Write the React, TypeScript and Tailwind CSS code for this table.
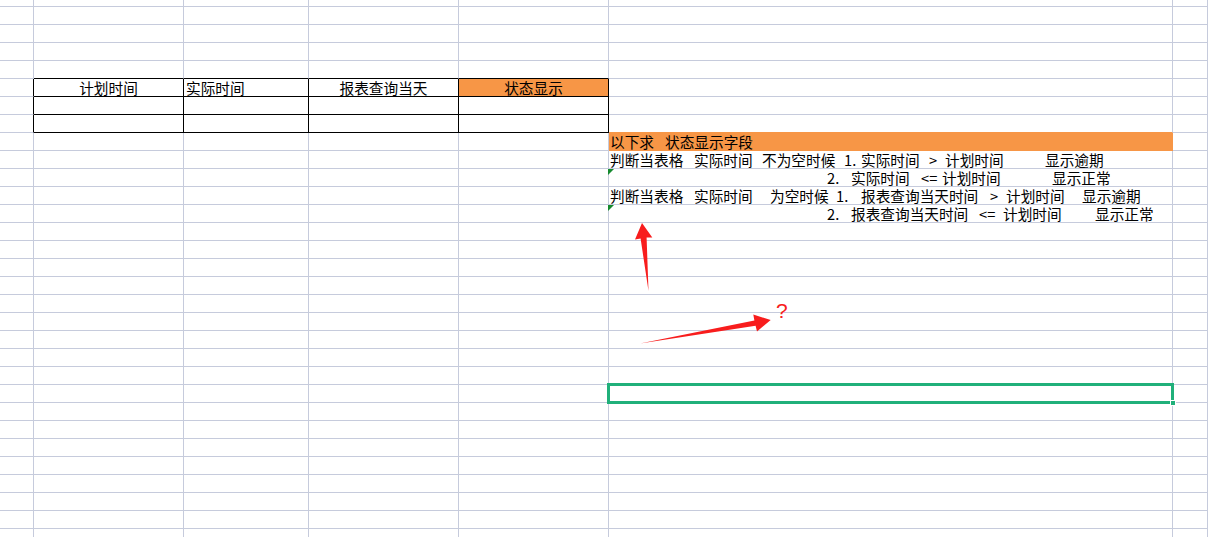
import React from 'react';

const ROWS = 31;
const COLS = 7;

type Seg = { w: string; t: string };

// text lines in the wide F column, rows 8..12
const noteLines: Record<number, { lead: string; segs: Seg[] }> = {
  8: {
    lead: 'pl-[1px]',
    segs: [
      { w: 'w-[55px]', t: '以下求' },
      { w: '', t: '状态显示字段' },
    ],
  },
  9: {
    lead: 'pl-[1px]',
    segs: [
      { w: 'w-[84px]', t: '判断当表格' },
      { w: 'w-[68px]', t: '实际时间' },
      { w: 'w-[82px]', t: '不为空时候' },
      { w: 'w-[17px]', t: '1.' },
      { w: 'w-[68px]', t: '实际时间' },
      { w: 'w-[16px]', t: '>' },
      { w: 'w-[100px]', t: '计划时间' },
      { w: '', t: '显示逾期' },
    ],
  },
  10: {
    lead: 'pl-[218px]',
    segs: [
      { w: 'w-[24px]', t: '2.' },
      { w: 'w-[70px]', t: '实际时间' },
      { w: 'w-[21px]', t: '<=' },
      { w: 'w-[110px]', t: '计划时间' },
      { w: '', t: '显示正常' },
    ],
  },
  11: {
    lead: 'pl-[1px]',
    segs: [
      { w: 'w-[84px]', t: '判断当表格' },
      { w: 'w-[76px]', t: '实际时间' },
      { w: 'w-[66px]', t: '为空时候' },
      { w: 'w-[25px]', t: '1.' },
      { w: 'w-[129px]', t: '报表查询当天时间' },
      { w: 'w-[16px]', t: '>' },
      { w: 'w-[76px]', t: '计划时间' },
      { w: '', t: '显示逾期' },
    ],
  },
  12: {
    lead: 'pl-[218px]',
    segs: [
      { w: 'w-[24px]', t: '2.' },
      { w: 'w-[128px]', t: '报表查询当天时间' },
      { w: 'w-[24px]', t: '<=' },
      { w: 'w-[92px]', t: '计划时间' },
      { w: '', t: '显示正常' },
    ],
  },
};

const headers: Record<number, { t: string; cls: string }> = {
  1: { t: '计划时间', cls: 'text-center' },
  2: { t: '实际时间', cls: 'pl-[2px]' },
  3: { t: '报表查询当天', cls: 'text-center' },
  4: { t: '状态显示', cls: 'text-center' },
};

function cellClass(r: number, c: number) {
  const inTable = r >= 5 && r <= 7;
  const orangeBar = r === 8 && c === 5;

  let right = 'border-r-[#c6cbdc]';
  if (inTable && c <= 4) right = 'border-r-black';
  if (orangeBar) right = 'border-r-[#f79646]';

  let bottom = 'border-b-[#c6cbdc]';
  if (r >= 4 && r <= 7 && c >= 1 && c <= 4) bottom = 'border-b-black';
  if ((r === 7 || r === 8) && c === 5) bottom = 'border-b-[#f79646]';

  let bg = '';
  if ((r === 5 && c === 4) || orangeBar) bg = 'bg-[#f79646]';

  const h = r === 0 ? 'h-[7px]' : 'h-[18px]';
  return `relative border-r border-b ${right} ${bottom} ${bg} ${h}`;
}

function ErrorMark() {
  return (
    <span className="absolute -left-px top-0 h-0 w-0 border-t-[6px] border-r-[6px] border-t-[#158a2e] border-r-transparent" />
  );
}

function cellContent(r: number, c: number) {
  if (r === 5 && headers[c]) {
    return (
      <div className={`whitespace-nowrap leading-[17px] ${headers[c].cls}`}>{headers[c].t}</div>
    );
  }
  if (c === 5 && noteLines[r]) {
    const line = noteLines[r];
    return (
      <>
        {(r === 10 || r === 12) && <ErrorMark />}
        <div className={`flex whitespace-nowrap leading-[17px] ${line.lead}`}>
          {line.segs.map((s, i) => (
            <span key={i} className={`inline-block shrink-0 ${s.w}`}>
              {s.t}
            </span>
          ))}
        </div>
      </>
    );
  }
  if (r === 22 && c === 5) {
    return (
      <div className="pointer-events-none absolute -left-[2px] -top-[2px] -right-[2px] -bottom-[2px] z-10 border-[3px] border-[#20b07a]">
        <span className="absolute -right-[5px] -bottom-[5px] h-[6px] w-[6px] border border-white bg-[#20b07a]" />
      </div>
    );
  }
  return null;
}

export default function App() {
  const rows = Array.from({ length: ROWS }, (_, r) => r);
  const cols = Array.from({ length: COLS }, (_, c) => c);

  return (
    <div className="relative h-[537px] w-[1208px] overflow-hidden bg-white font-['Noto_Sans_CJK_SC',sans-serif] text-[14.67px] text-black">
      <div className="grid grid-cols-[34px_150px_125px_150px_150px_564px_1fr]">
        {rows.map(r =>
          cols.map(c => (
            <div key={`${r}-${c}`} className={cellClass(r, c)}>
              {cellContent(r, c)}
            </div>
          ))
        )}
      </div>

      {/* red annotation arrows drawn over the sheet */}
      <svg className="pointer-events-none absolute left-0 top-0 z-20" width="1208" height="537">
        <polygon
          points="642,223 652.3,237.5 646.6,237.6 648.5,291 640.6,238.6 635,239.5"
          fill="#f81d1d"
        />
        <polygon
          points="770.7,320 753.3,314.6 754.4,320.6 640,343.5 755.6,325.8 757,331.5"
          fill="#f81d1d"
        />
        <text x="776" y="318" fontSize="21" fill="#f81d1d" fontFamily="Liberation Sans, sans-serif">
          ?
        </text>
      </svg>
    </div>
  );
}
